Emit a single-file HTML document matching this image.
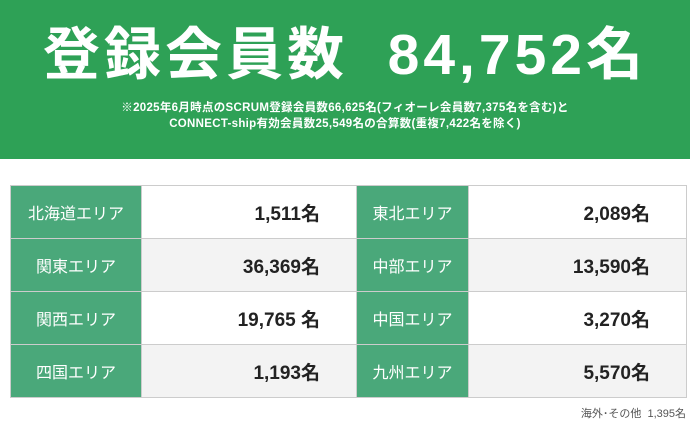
<html><head><style>
body{margin:0;width:690px;height:430px;background:#fff;font-family:"Liberation Sans","Noto Sans CJK JP",sans-serif;position:relative;overflow:hidden}
.hd{position:absolute;left:0;top:0;width:690px;height:159px;background:#2ea156;color:#fff;text-align:center}
.t{position:absolute;left:0;right:0;top:22px;font-size:57px;font-weight:bold;line-height:66px;letter-spacing:4px;white-space:nowrap}
.n{position:absolute;left:0;right:0;top:100px;font-size:11.5px;font-weight:bold;line-height:16px;letter-spacing:0.3px}
table{position:absolute;left:10px;top:185px;width:677px;border-collapse:collapse}
td{border:1px solid #ccc;height:53px;padding:0;font-size:17px}
td.l{background:#4aa87a;color:#fff;text-align:center;font-size:16px}
td.v{text-align:right;font-weight:bold;font-size:19px;color:#222;padding-right:36px}
tr:nth-child(2n) td.v{background:#f3f3f3}
.f{position:absolute;right:4px;top:405px;font-size:11px;color:#555}
</style></head><body>
<div class="hd"><div class="t">登録会員数&nbsp;&nbsp;84,752名</div>
<div class="n">※2025年6月時点のSCRUM登録会員数66,625名(フィオーレ会員数7,375名を含む)と<br>CONNECT-ship有効会員数25,549名の合算数(重複7,422名を除く)</div></div>
<table>
<tr><td class="l" style="width:130px">北海道エリア</td><td class="v" style="width:178px">1,511名</td><td class="l" style="width:111px">東北エリア</td><td class="v">2,089名</td></tr>
<tr><td class="l">関東エリア</td><td class="v">36,369名</td><td class="l">中部エリア</td><td class="v">13,590名</td></tr>
<tr><td class="l">関西エリア</td><td class="v">19,765 名</td><td class="l">中国エリア</td><td class="v">3,270名</td></tr>
<tr><td class="l">四国エリア</td><td class="v">1,193名</td><td class="l">九州エリア</td><td class="v">5,570名</td></tr>
</table>
<div class="f">海外･その他&nbsp;&nbsp;1,395名</div>
</body></html>
